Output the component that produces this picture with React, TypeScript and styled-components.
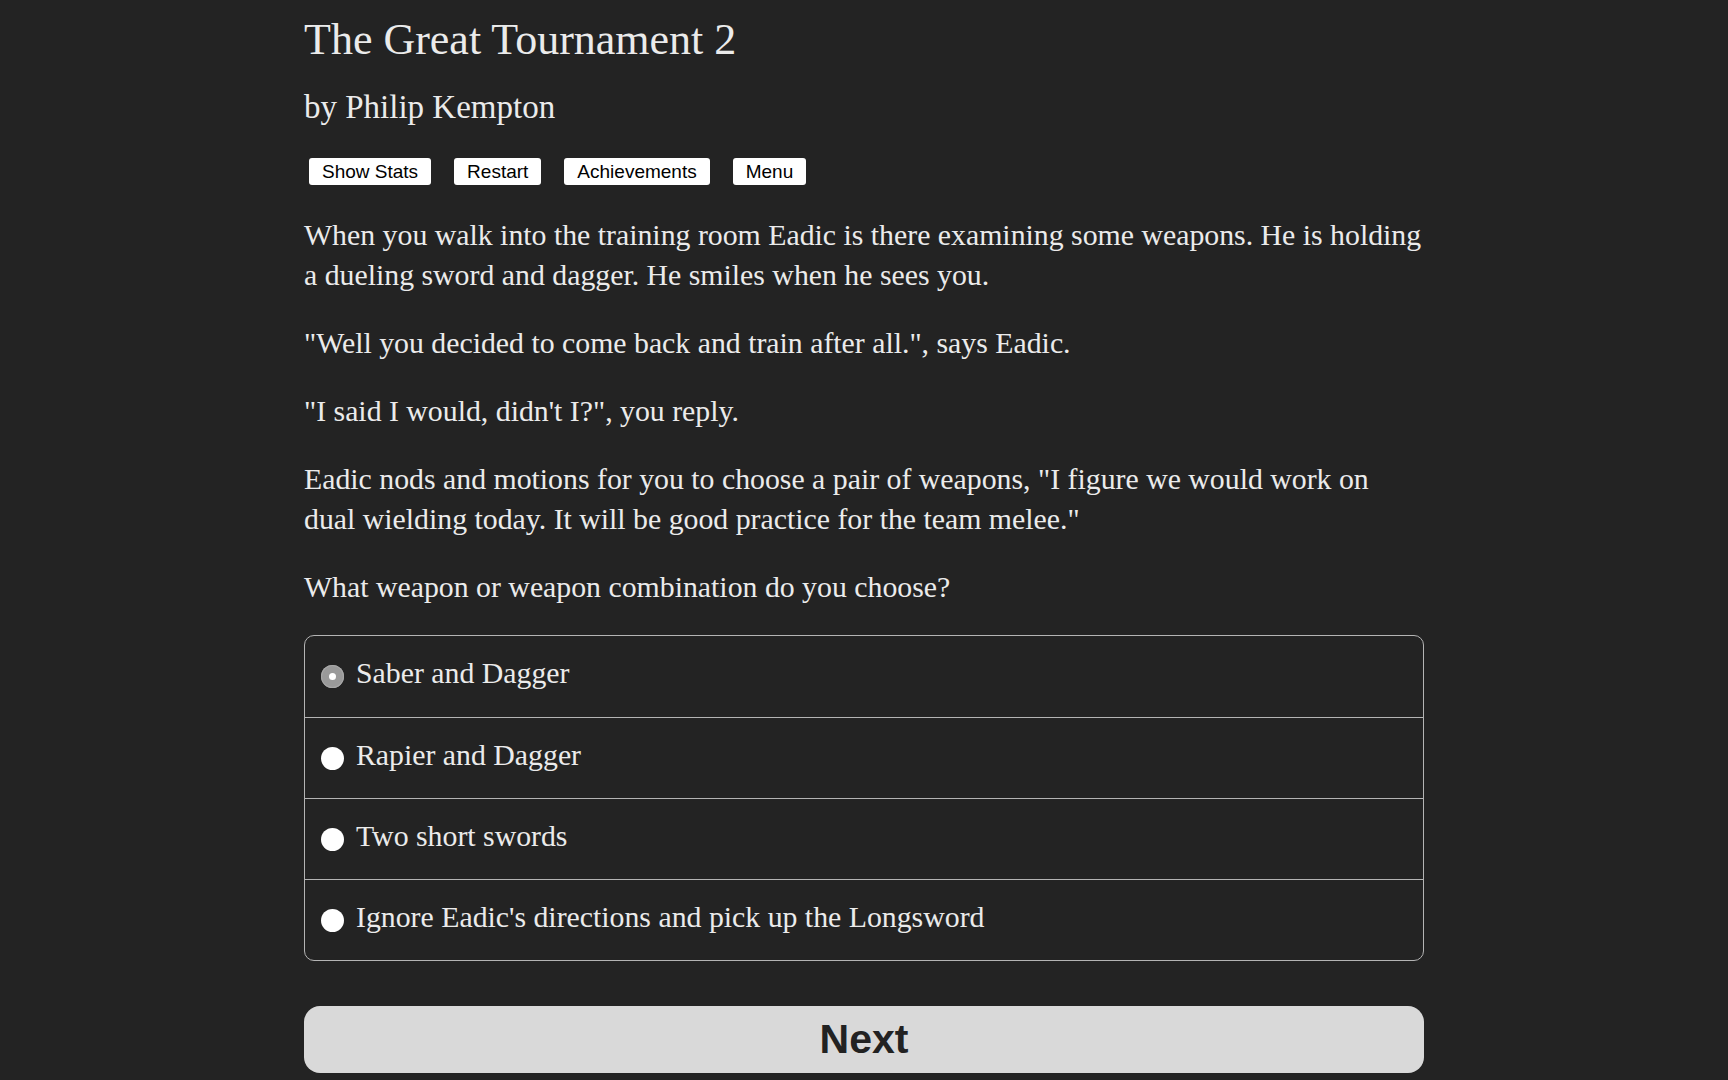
import React, { useState } from 'react';
import styled, { createGlobalStyle } from 'styled-components';

const GlobalStyle = createGlobalStyle`
  html, body {
    margin: 0;
    padding: 0;
    background-color: #232323;
  }
`;

const Page = styled.div`
  width: 1120px;
  margin: 0 auto;
  padding-bottom: 40px;
  color: #ebebeb;
  font-family: "Liberation Serif", "Times New Roman", serif;
`;

const Title = styled.h1`
  font-size: 44px;
  font-weight: normal;
  line-height: 52px;
  margin: 14px 0 0;
`;

const Author = styled.h2`
  font-size: 33px;
  font-weight: normal;
  line-height: 40px;
  margin: 21px 0 0;
`;

const ButtonBar = styled.div`
  display: flex;
  gap: 23px;
  padding-left: 5px;
  margin-top: 31px;
`;

const ToolButton = styled.button`
  height: 27px;
  padding: 0 13px;
  border: none;
  border-radius: 3px;
  background: #fff;
  color: #000;
  font-family: "Liberation Sans", Arial, sans-serif;
  font-size: 19px;
  line-height: 27px;
  cursor: pointer;
`;

const Story = styled.div`
  margin-top: 30px;
  font-size: 29.8px;
  line-height: 40px;
`;

const Para = styled.p`
  margin: 0 0 28px;
`;

const Choices = styled.div`
  margin-top: 1px;
  border: 1px solid #b4b4b4;
  border-radius: 10px;
`;

const Choice = styled.label<{ $first?: boolean }>`
  display: flex;
  align-items: center;
  gap: 12px;
  height: 81px;
  box-sizing: border-box;
  padding: 0 0 7px 16px;
  font-size: 29.8px;
  border-top: ${p => (p.$first ? 'none' : '1px solid #b4b4b4')};
  cursor: pointer;
`;

const Radio = styled.span<{ $checked: boolean }>`
  width: 23px;
  height: 23px;
  border-radius: 50%;
  flex-shrink: 0;
  margin-top: 7px;
  background: ${p => (p.$checked ? '#9a9a9a' : '#ffffff')};
  box-shadow: ${p => (p.$checked ? 'inset 0 0 0 1px #a8a8a8' : 'none')};
  display: flex;
  align-items: center;
  justify-content: center;

  &::after {
    content: '';
    width: 7px;
    height: 7px;
    border-radius: 50%;
    background: #fff;
    display: ${p => (p.$checked ? 'block' : 'none')};
  }
`;

const NextButton = styled.button`
  display: block;
  width: 100%;
  height: 67px;
  margin-top: 45px;
  border: none;
  border-radius: 16px;
  background: #d9d9d9;
  color: #222;
  font-family: "Liberation Sans", Arial, sans-serif;
  font-weight: bold;
  font-size: 41px;
  cursor: pointer;
`;

const options = [
  'Saber and Dagger',
  'Rapier and Dagger',
  'Two short swords',
  "Ignore Eadic's directions and pick up the Longsword",
];

export default function App() {
  const [picked, setPicked] = useState(0);

  return (
    <>
      <GlobalStyle />
      <Page>
        <Title>The Great Tournament 2</Title>
        <Author>by Philip Kempton</Author>
        <ButtonBar>
          <ToolButton>Show Stats</ToolButton>
          <ToolButton>Restart</ToolButton>
          <ToolButton>Achievements</ToolButton>
          <ToolButton>Menu</ToolButton>
        </ButtonBar>
        <Story>
          <Para>
            When you walk into the training room Eadic is there examining some weapons. He is holding a
            dueling sword and dagger. He smiles when he sees you.
          </Para>
          <Para>"Well you decided to come back and train after all.", says Eadic.</Para>
          <Para>"I said I would, didn't I?", you reply.</Para>
          <Para>
            Eadic nods and motions for you to choose a pair of weapons, "I figure we would work on dual
            wielding today. It will be good practice for the team melee."
          </Para>
          <Para>What weapon or weapon combination do you choose?</Para>
        </Story>
        <Choices>
          {options.map((o, i) => (
            <Choice key={o} $first={i === 0} onClick={() => setPicked(i)}>
              <Radio $checked={picked === i} />
              {o}
            </Choice>
          ))}
        </Choices>
        <NextButton>Next</NextButton>
      </Page>
    </>
  );
}
